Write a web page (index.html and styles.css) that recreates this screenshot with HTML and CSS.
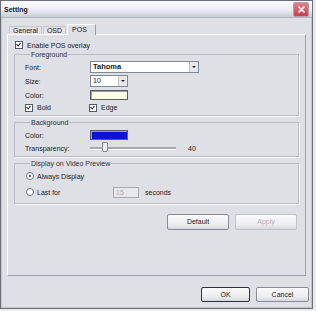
FILE: index.html
```html
<!DOCTYPE html>
<html lang="en">
<head>
    <meta charset="UTF-8">
    <title>Setting</title>
    <link rel="stylesheet" href="styles.css">
</head>
<body>
    <div class="window">
        <div class="titlebar">
            <span class="title">Setting</span>
            <span class="close">
                <svg width="9" height="9" viewBox="0 0 9 9"><path d="M1.5 1.5 L7.5 7.5 M7.5 1.5 L1.5 7.5" stroke="#fff" stroke-width="1.6"/></svg>
            </span>
        </div>
        <div class="content">
            <div class="tabs">
                <span class="tab">General</span>
                <span class="tab">OSD</span>
                <span class="tab active">POS</span>
            </div>
            <div class="panel">
                <div class="check-row first">
                    <span class="checkbox checked"></span> Enable POS overlay
                </div>

                <fieldset class="group fg">
                    <legend>Foreground</legend>
                    <div class="row">
                        <span class="label">Font:</span>
                        <span class="select wide"><span class="value bold">Tahoma</span><span class="arrow"></span></span>
                    </div>
                    <div class="row">
                        <span class="label">Size:</span>
                        <span class="select narrow"><span class="value">10</span><span class="arrow"></span></span>
                    </div>
                    <div class="row">
                        <span class="label">Color:</span>
                        <span class="swatch pale"></span>
                    </div>
                    <div class="row short">
                        <span class="label"><span class="checkbox checked"></span> Bold</span>
                        <span class="check-inline"><span class="checkbox checked"></span> Edge</span>
                    </div>
                </fieldset>

                <fieldset class="group bg">
                    <legend>Background</legend>
                    <div class="row">
                        <span class="label">Color:</span>
                        <span class="swatch blue"></span>
                    </div>
                    <div class="row slim">
                        <span class="label">Transparency:</span>
                        <span class="slider"><span class="thumb"></span></span>
                        <span class="slider-value">40</span>
                    </div>
                </fieldset>

                <fieldset class="group disp">
                    <legend>Display on Video Preview</legend>
                    <div class="radio-row">
                        <span class="radio on"></span> Always Display
                    </div>
                    <div class="radio-row last">
                        <span class="label"><span class="radio"></span> Last for</span>
                        <span class="field">15</span>
                        <span class="unit">seconds</span>
                    </div>
                </fieldset>

                <div class="panel-buttons">
                    <span class="button">Default</span>
                    <span class="button disabled">Apply</span>
                </div>
            </div>
            <div class="footer">
                <span class="button small default">OK</span>
                <span class="button small">Cancel</span>
            </div>
        </div>
    </div>
</body>
</html>
```

FILE: styles.css
```css
body {
    margin: 0;
    padding: 0;
    background-color: #ececef;
    font-family: "Liberation Sans", Arial, sans-serif;
    font-size: 7px;
    color: #1a1a1a;
}

.window {
    width: 311px;
    height: 307px;
    border: 1px solid #6e6e7a;
    box-shadow: inset 0 0 0 1px #c4c4cc;
    background-color: #dfdfe6;
}

.titlebar {
    height: 16px;
    display: flex;
    align-items: center;
    justify-content: space-between;
    padding: 0 3px 0 3px;
    background: linear-gradient(to bottom, #fbfbfd 0%, #eceef3 55%, #c9cdd7 100%);
    border-bottom: 1px solid #b4b8c4;
}

.title {
    font-weight: bold;
    font-size: 7px;
}

.close {
    width: 14px;
    height: 13px;
    display: flex;
    align-items: center;
    justify-content: center;
    background: linear-gradient(to bottom, #e0808c, #c8404f);
    border: 1px solid #b8a0a8;
    border-radius: 2px;
}

.content {
    padding: 0 6px 0 6px;
}

.tabs {
    display: flex;
    align-items: flex-end;
    height: 10px;
    margin-top: 6px;
    padding-left: 2px;
}

.tab {
    height: 7px;
    line-height: 7px;
    padding: 0 3px;
    border: 1px solid #c6c6ce;
    border-bottom: none;
    background-color: #e2e2e8;
}

.tab + .tab {
    margin-left: 1px;
}

.tab.active {
    height: 10px;
    line-height: 10px;
    padding: 0 8px 0 4px;
    border-color: #ffffff #9c9ca8 #9c9ca8 #ffffff;
    background-color: #dfdfe6;
    margin-bottom: -1px;
    position: relative;
}

.panel {
    height: 235px;
    border: 1px solid #a0a0ac;
    border-top-color: #ffffff;
    border-left-color: #ffffff;
    padding: 5px 6px 0 6px;
    display: flex;
    flex-direction: column;
}

.check-row {
    display: flex;
    align-items: center;
    height: 10px;
    margin-left: 1px;
}

.checkbox {
    display: inline-block;
    width: 6px;
    height: 6px;
    border: 1px solid #4c5a6c;
    background-color: #ffffff;
    margin-right: 4px;
    position: relative;
}

.checkbox.checked::after {
    content: "";
    position: absolute;
    left: 1px;
    top: 0;
    width: 2px;
    height: 3px;
    border-right: 1px solid #202020;
    border-bottom: 1px solid #202020;
    transform: rotate(40deg);
}

.group {
    margin: 0;
    padding: 0 0 2px 10px;
    border: 1px solid #bcbcc6;
    box-shadow: 1px 1px 0 #f6f6f8;
}

.group legend {
    padding: 0 1px;
    margin-left: 5px;
    margin-bottom: 1px;
    height: 9px;
    line-height: 9px;
    color: #303038;
}

.group + .group {
    margin-top: 2px;
}

.row {
    display: flex;
    align-items: center;
    height: 14px;
}

.row.short {
    height: 11px;
}

.row.slim {
    height: 12px;
}

.label {
    width: 65px;
    display: flex;
    align-items: center;
    flex-shrink: 0;
}

.select {
    display: flex;
    height: 10px;
    border: 1px solid #7f8898;
    background-color: #ffffff;
    box-sizing: content-box;
}

.select.wide {
    width: 107px;
}

.select.narrow {
    width: 36px;
}

.value {
    flex: 1;
    line-height: 10px;
    padding-left: 2px;
}

.bold {
    font-weight: bold;
    font-size: 7.5px;
}

.arrow {
    width: 8px;
    background-color: #e8e8ec;
    border-left: 1px solid #c0c0c8;
    position: relative;
}

.arrow::after {
    content: "";
    position: absolute;
    left: 2px;
    top: 4px;
    border-left: 2px solid transparent;
    border-right: 2px solid transparent;
    border-top: 2px solid #202020;
}

.swatch {
    width: 36px;
    height: 8px;
    border: 1px solid #5c5c68;
    box-shadow: inset 1px 1px 0 #9c9ca8;
}

.swatch.pale {
    background-color: #fbfbe6;
}

.swatch.blue {
    background-color: #0a12d8;
}

.check-inline {
    display: flex;
    align-items: center;
    margin-left: -1px;
}

.slider {
    width: 86px;
    height: 2px;
    background-color: #a8a8b4;
    border-bottom: 1px solid #ffffff;
    position: relative;
}

.thumb {
    position: absolute;
    left: 12px;
    top: -5px;
    width: 4px;
    height: 8px;
    background-color: #f0f0f2;
    border: 1px solid #8c8c98;
    border-radius: 1px 1px 2px 2px;
}

.slider-value {
    margin-left: 12px;
}

.radio-row {
    display: flex;
    align-items: center;
    height: 14px;
    margin-left: 1px;
}

.radio-row.last {
    height: 18px;
    margin-left: 0;
    padding-left: 1px;
}

.radio-row.last .label {
    width: 87px;
}

.radio {
    display: inline-block;
    width: 6px;
    height: 6px;
    border: 1px solid #6a7484;
    border-radius: 50%;
    background-color: #ffffff;
    margin-right: 3px;
    position: relative;
}

.radio.on::after {
    content: "";
    position: absolute;
    left: 2px;
    top: 2px;
    width: 2px;
    height: 2px;
    border-radius: 50%;
    background-color: #202020;
}

.field {
    width: 22px;
    height: 9px;
    line-height: 9px;
    padding-left: 2px;
    border: 1px solid #a8a8b4;
    background-color: #e8e8ec;
    color: #a8a8b0;
}

.unit {
    margin-left: 6px;
}

.panel-buttons {
    display: flex;
    justify-content: flex-end;
    gap: 6px;
    margin-top: 10px;
    padding-right: 2px;
}

.button {
    width: 60px;
    height: 14px;
    line-height: 14px;
    text-align: center;
    border: 1px solid #8a8a98;
    border-radius: 2px;
    background: linear-gradient(to bottom, #fbfbfb, #ececf0 70%, #d6d6de);
}

.button.disabled {
    color: #b0b0b8;
    border-color: #c0c0c8;
}

.footer {
    display: flex;
    justify-content: flex-end;
    gap: 6px;
    margin-top: 11px;
    margin-right: -3px;
}

.button.small {
    width: 51px;
    height: 13px;
    line-height: 13px;
}

.button.default {
    width: 47px;
    border-color: #303040;
}
```
